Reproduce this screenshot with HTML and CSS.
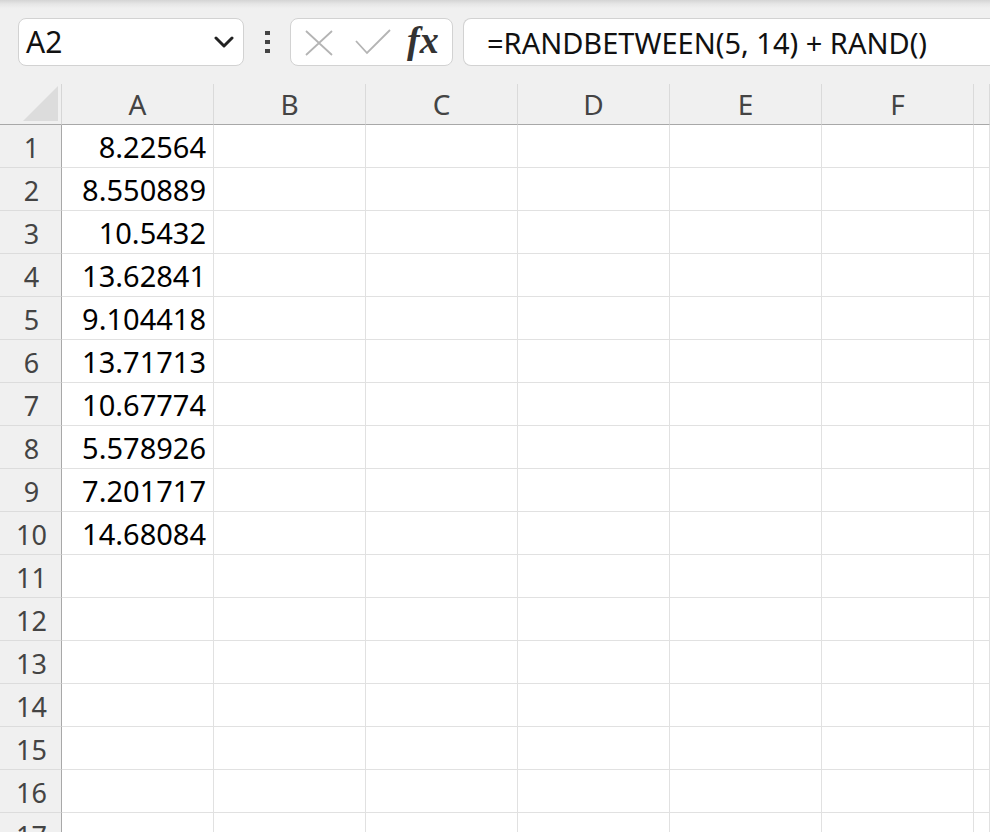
FILE: index.html
```html
<!DOCTYPE html>
<html>
<head>
<meta charset="utf-8">
<link rel="stylesheet" href="styles.css">
</head>
<body>
<div class="toolbar">
  <div class="namebox">
    <span class="name">A2</span>
    <svg class="chev" width="20" height="12" viewBox="0 0 20 12"><path d="M2 2 L10 10 L18 2" fill="none" stroke="#222" stroke-width="3" stroke-linecap="round" stroke-linejoin="round"/></svg>
  </div>
  <div class="dots"><i></i><i></i><i></i></div>
  <div class="fxbox">
    <svg class="xicon" width="28" height="26" viewBox="0 0 28 26"><path d="M1 1 L27 25 M27 1 L1 25" stroke="#b4b4b4" stroke-width="1.8" fill="none"/></svg>
    <svg class="check" width="36" height="26" viewBox="0 0 36 26"><path d="M1 12 L12 24 L35 1" stroke="#b4b4b4" stroke-width="1.8" fill="none"/></svg>
    <span class="fx">fx</span>
  </div>
  <div class="formula">=RANDBETWEEN(5, 14) + RAND()</div>
</div>
<div class="sheet">
  <div class="row head">
    <div class="corner"><span class="tri"></span></div>
    <div class="ch">A</div><div class="ch">B</div><div class="ch">C</div><div class="ch">D</div><div class="ch">E</div><div class="ch">F</div><div class="ch"></div>
  </div>
  <div class="row"><div class="rh">1</div><div class="c num">8.22564</div><div class="c"></div><div class="c"></div><div class="c"></div><div class="c"></div><div class="c"></div><div class="c"></div></div>
  <div class="row"><div class="rh">2</div><div class="c num">8.550889</div><div class="c"></div><div class="c"></div><div class="c"></div><div class="c"></div><div class="c"></div><div class="c"></div></div>
  <div class="row"><div class="rh">3</div><div class="c num">10.5432</div><div class="c"></div><div class="c"></div><div class="c"></div><div class="c"></div><div class="c"></div><div class="c"></div></div>
  <div class="row"><div class="rh">4</div><div class="c num">13.62841</div><div class="c"></div><div class="c"></div><div class="c"></div><div class="c"></div><div class="c"></div><div class="c"></div></div>
  <div class="row"><div class="rh">5</div><div class="c num">9.104418</div><div class="c"></div><div class="c"></div><div class="c"></div><div class="c"></div><div class="c"></div><div class="c"></div></div>
  <div class="row"><div class="rh">6</div><div class="c num">13.71713</div><div class="c"></div><div class="c"></div><div class="c"></div><div class="c"></div><div class="c"></div><div class="c"></div></div>
  <div class="row"><div class="rh">7</div><div class="c num">10.67774</div><div class="c"></div><div class="c"></div><div class="c"></div><div class="c"></div><div class="c"></div><div class="c"></div></div>
  <div class="row"><div class="rh">8</div><div class="c num">5.578926</div><div class="c"></div><div class="c"></div><div class="c"></div><div class="c"></div><div class="c"></div><div class="c"></div></div>
  <div class="row"><div class="rh">9</div><div class="c num">7.201717</div><div class="c"></div><div class="c"></div><div class="c"></div><div class="c"></div><div class="c"></div><div class="c"></div></div>
  <div class="row"><div class="rh">10</div><div class="c num">14.68084</div><div class="c"></div><div class="c"></div><div class="c"></div><div class="c"></div><div class="c"></div><div class="c"></div></div>
  <div class="row"><div class="rh">11</div><div class="c"></div><div class="c"></div><div class="c"></div><div class="c"></div><div class="c"></div><div class="c"></div><div class="c"></div></div>
  <div class="row"><div class="rh">12</div><div class="c"></div><div class="c"></div><div class="c"></div><div class="c"></div><div class="c"></div><div class="c"></div><div class="c"></div></div>
  <div class="row"><div class="rh">13</div><div class="c"></div><div class="c"></div><div class="c"></div><div class="c"></div><div class="c"></div><div class="c"></div><div class="c"></div></div>
  <div class="row"><div class="rh">14</div><div class="c"></div><div class="c"></div><div class="c"></div><div class="c"></div><div class="c"></div><div class="c"></div><div class="c"></div></div>
  <div class="row"><div class="rh">15</div><div class="c"></div><div class="c"></div><div class="c"></div><div class="c"></div><div class="c"></div><div class="c"></div><div class="c"></div></div>
  <div class="row"><div class="rh">16</div><div class="c"></div><div class="c"></div><div class="c"></div><div class="c"></div><div class="c"></div><div class="c"></div><div class="c"></div></div>
  <div class="row"><div class="rh">17</div><div class="c"></div><div class="c"></div><div class="c"></div><div class="c"></div><div class="c"></div><div class="c"></div><div class="c"></div></div>
</div>
</body>
</html>
```
FILE: styles.css
```css
* { box-sizing: border-box; }
html, body {
  margin: 0;
  padding: 0;
  width: 990px;
  height: 832px;
  overflow: hidden;
  background: #f0f0f0;
  font-family: "Noto Sans", "Open Sans", sans-serif;
}
.toolbar {
  height: 84px;
  padding: 18px 0 0 18px;
  display: flex;
  align-items: flex-start;
  background: linear-gradient(#d4d4d4 0px, #e6e6e6 4px, #efefef 8px, #f0f0f0 10px);
}
.namebox {
  width: 226px;
  height: 48px;
  background: #fff;
  border: 1px solid #d2d2d2;
  border-radius: 8px;
  display: flex;
  align-items: center;
  justify-content: space-between;
  padding: 0 9px 0 7px;
}
.name {
  font-size: 30px;
  line-height: 1;
  color: #111;
}
.chev { display: block; }
.dots {
  margin: 13px 0 0 21px;
  width: 5px;
  display: flex;
  flex-direction: column;
  gap: 5px;
}
.dots i {
  display: block;
  width: 5px;
  height: 4px;
  background: #444;
}
.fxbox {
  margin-left: 20px;
  width: 163px;
  height: 48px;
  background: #fff;
  border: 1px solid #d2d2d2;
  border-radius: 8px;
  display: flex;
  align-items: center;
  padding-left: 14px;
}
.xicon { display: block; margin-top: 1px; }
.check { display: block; margin-left: 22px; margin-top: -1px; }
.fx {
  margin-left: 16px;
  font-family: "Liberation Serif", "DejaVu Serif", serif;
  font-style: italic;
  font-weight: bold;
  font-size: 38px;
  line-height: 1;
  color: #333;
  margin-top: -4px;
}
.formula {
  margin-left: 10px;
  flex: 1;
  height: 48px;
  background: #fff;
  border: 1px solid #d2d2d2;
  border-right: none;
  border-radius: 8px 0 0 8px;
  display: flex;
  align-items: center;
  padding-left: 23px;
  font-size: 29px;
  line-height: 1;
  color: #111;
  white-space: nowrap;
}
.sheet {
  display: flex;
  flex-direction: column;
}
.row {
  display: grid;
  grid-template-columns: 62px repeat(6, 152px) 1fr;
  height: 43px;
  flex-shrink: 0;
}
.row.head { height: 41px; }
.corner {
  border-right: 1px solid #d6d6d6;
  border-bottom: 1px solid #a8a8a8;
  position: relative;
}
.tri {
  position: absolute;
  left: 23px;
  top: 2px;
  width: 35px;
  height: 35px;
  background: #dcdcdc;
  clip-path: polygon(100% 0, 100% 100%, 0 100%);
}
.ch {
  border-bottom: 1px solid #a8a8a8;
  border-right: 1px solid #dadada;
  display: flex;
  align-items: flex-end;
  justify-content: center;
  font-size: 28px;
  line-height: 1;
  color: #444;
  padding-bottom: 6px;
}
.rh {
  background: #f0f0f0;
  border-right: 1px solid #a8a8a8;
  border-bottom: 1px solid #dcdcdc;
  display: flex;
  align-items: flex-end;
  justify-content: center;
  font-size: 27px;
  line-height: 1;
  color: #444;
  padding-bottom: 6px;
  padding-left: 2px;
}
.c {
  background: #fff;
  border-right: 1px solid #e1e1e1;
  border-bottom: 1px solid #e1e1e1;
}
.num {
  display: flex;
  align-items: flex-end;
  justify-content: flex-end;
  font-size: 29px;
  line-height: 1;
  color: #000;
  padding: 0 7px 6px 0;
}
```
